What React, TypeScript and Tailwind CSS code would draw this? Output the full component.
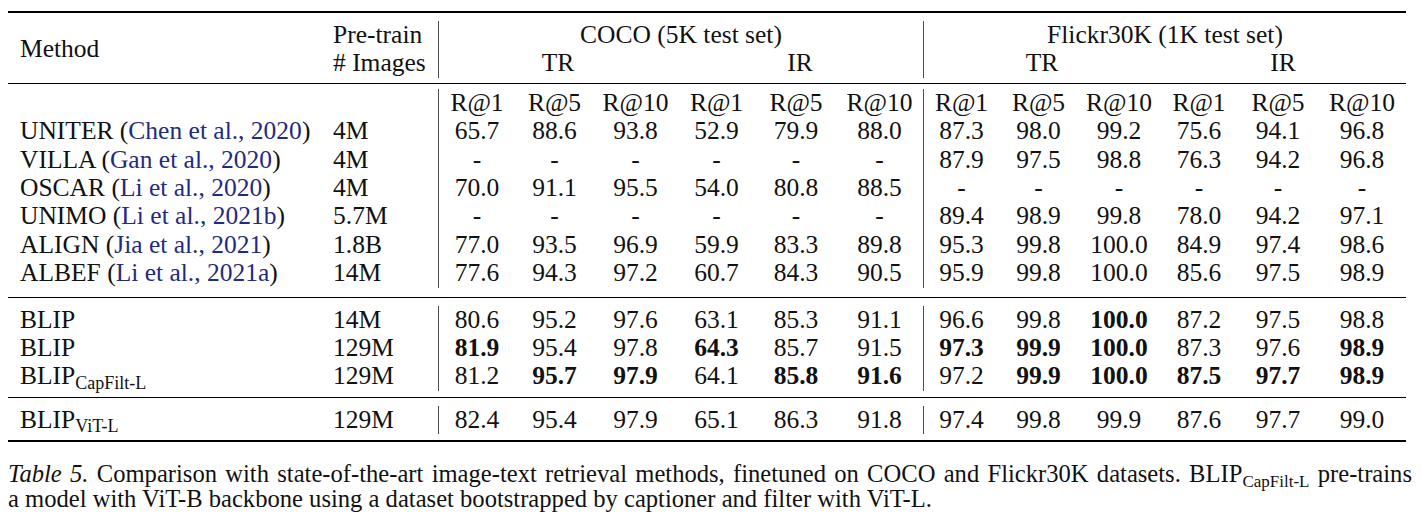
import React from "react";

type Row = { m: string; sub?: string; cite?: string; n: string; v: string[] };

const rowsA: Row[] = [
  { m: "UNITER", cite: "Chen et al., 2020", n: "4M", v: ["65.7", "88.6", "93.8", "52.9", "79.9", "88.0", "87.3", "98.0", "99.2", "75.6", "94.1", "96.8"] },
  { m: "VILLA", cite: "Gan et al., 2020", n: "4M", v: ["-", "-", "-", "-", "-", "-", "87.9", "97.5", "98.8", "76.3", "94.2", "96.8"] },
  { m: "OSCAR", cite: "Li et al., 2020", n: "4M", v: ["70.0", "91.1", "95.5", "54.0", "80.8", "88.5", "-", "-", "-", "-", "-", "-"] },
  { m: "UNIMO", cite: "Li et al., 2021b", n: "5.7M", v: ["-", "-", "-", "-", "-", "-", "89.4", "98.9", "99.8", "78.0", "94.2", "97.1"] },
  { m: "ALIGN", cite: "Jia et al., 2021", n: "1.8B", v: ["77.0", "93.5", "96.9", "59.9", "83.3", "89.8", "95.3", "99.8", "100.0", "84.9", "97.4", "98.6"] },
  { m: "ALBEF", cite: "Li et al., 2021a", n: "14M", v: ["77.6", "94.3", "97.2", "60.7", "84.3", "90.5", "95.9", "99.8", "100.0", "85.6", "97.5", "98.9"] },
];

const rowsB: Row[] = [
  { m: "BLIP", n: "14M", v: ["80.6", "95.2", "97.6", "63.1", "85.3", "91.1", "96.6", "99.8", "*100.0", "87.2", "97.5", "98.8"] },
  { m: "BLIP", n: "129M", v: ["*81.9", "95.4", "97.8", "*64.3", "85.7", "91.5", "*97.3", "*99.9", "*100.0", "87.3", "97.6", "*98.9"] },
  { m: "BLIP", sub: "CapFilt-L", n: "129M", v: ["81.2", "*95.7", "*97.9", "64.1", "*85.8", "*91.6", "97.2", "*99.9", "*100.0", "*87.5", "*97.7", "*98.9"] },
];

const rowsC: Row[] = [
  { m: "BLIP", sub: "ViT-L", n: "129M", v: ["82.4", "95.4", "97.9", "65.1", "86.3", "91.8", "97.4", "99.8", "99.9", "87.6", "97.7", "99.0"] },
];

const BAR = "border-l border-[#4d4d4d]";

function DataRow({ r }: { r: Row }) {
  return (
    <tr className="h-[28.4px]">
      <td className="p-0 pl-[12px] text-left whitespace-nowrap">
        {r.m}
        {r.sub && <sub className="text-[18px]">{r.sub}</sub>}
        {r.cite && (
          <>
            {" ("}
            <span className="text-[#1f2a82]">{r.cite}</span>
            {")"}
          </>
        )}
      </td>
      <td className="p-0 pl-[12px] text-left">{r.n}</td>
      {r.v.map((x, i) => {
        const bold = x.startsWith("*");
        const t = bold ? x.slice(1) : x;
        return (
          <td key={i} className={`p-0 text-center ${i === 0 || i === 6 ? BAR : ""} ${bold ? "font-bold" : ""}`}>
            {t}
          </td>
        );
      })}
    </tr>
  );
}

function Rule({ pt, pb, thick }: { pt: string; pb: string; thick?: boolean }) {
  return (
    <tr>
      <td colSpan={14} className={`p-0 ${pt} ${pb}`}>
        <div className={thick ? "h-[2px] bg-black" : "h-px bg-black"} />
      </td>
    </tr>
  );
}

export default function App() {
  const rHeads = ["R@1", "R@5", "R@10", "R@1", "R@5", "R@10", "R@1", "R@5", "R@10", "R@1", "R@5", "R@10"];
  return (
    <div
      className="w-[1422px] h-[528px] bg-white text-[#111] overflow-hidden pt-[11px]"
      style={{ fontFamily: '"Liberation Serif", "Times New Roman", serif' }}
    >
      <table className="ml-[8px] w-[1398px] table-fixed border-separate border-spacing-0 text-[25.5px] leading-[28.4px]">
        <colgroup>
          <col className="w-[313px]" />
          <col className="w-[117px]" />
          <col className="w-[77px]" />
          <col className="w-[79px]" />
          <col className="w-[83px]" />
          <col className="w-[79px]" />
          <col className="w-[80px]" />
          <col className="w-[87px]" />
          <col className="w-[76px]" />
          <col className="w-[79px]" />
          <col className="w-[82px]" />
          <col className="w-[78px]" />
          <col className="w-[80px]" />
          <col className="w-[88px]" />
        </colgroup>
        <tbody>
          <tr>
            <td colSpan={14} className="p-0 pb-[8px]">
              <div className="h-[2px] bg-black" />
            </td>
          </tr>
          <tr className="h-[28px]">
            <td rowSpan={2} className="p-0 pl-[12px] text-left align-middle">
              Method
            </td>
            <td className="p-0 pl-[12px] text-left">Pre-train</td>
            <td colSpan={6} className={`p-0 text-center ${BAR}`}>
              COCO (5K test set)
            </td>
            <td colSpan={6} className={`p-0 text-center ${BAR}`}>
              Flickr30K (1K test set)
            </td>
          </tr>
          <tr className="h-[28px]">
            <td className="p-0 pl-[12px] text-left"># Images</td>
            <td colSpan={3} className={`p-0 text-center ${BAR}`}>
              TR
            </td>
            <td colSpan={3} className="p-0 text-center">
              IR
            </td>
            <td colSpan={3} className={`p-0 text-center ${BAR}`}>
              TR
            </td>
            <td colSpan={3} className="p-0 text-center">
              IR
            </td>
          </tr>
          <Rule pt="pt-[5px]" pb="pb-[5px]" />
          <tr className="h-[28.4px]">
            <td className="p-0" />
            <td className="p-0" />
            {rHeads.map((h, i) => (
              <td key={i} className={`p-0 text-center ${i === 0 || i === 6 ? BAR : ""}`}>
                {h}
              </td>
            ))}
          </tr>
          {rowsA.map((r, i) => (
            <DataRow key={i} r={r} />
          ))}
          <Rule pt="pt-[9px]" pb="pb-[8px]" />
          {rowsB.map((r, i) => (
            <DataRow key={i} r={r} />
          ))}
          <Rule pt="pt-[6px]" pb="pb-[8px]" />
          {rowsC.map((r, i) => (
            <DataRow key={i} r={r} />
          ))}
          <Rule pt="pt-[6px]" pb="pb-0" thick />
        </tbody>
      </table>
      <div className="ml-[8px] mt-[19px] w-[1404px] text-[24.6px] leading-[25px]">
        <p className="text-justify [text-align-last:justify] whitespace-nowrap">
          <i>Table 5.</i> Comparison with state-of-the-art image-text retrieval methods, finetuned on COCO and Flickr30K
          datasets. BLIP<sub className="text-[17px]">CapFilt-L</sub> pre-trains
        </p>
        <p className="text-left whitespace-nowrap">
          a model with ViT-B backbone using a dataset bootstrapped by captioner and filter with ViT-L.
        </p>
      </div>
    </div>
  );
}
